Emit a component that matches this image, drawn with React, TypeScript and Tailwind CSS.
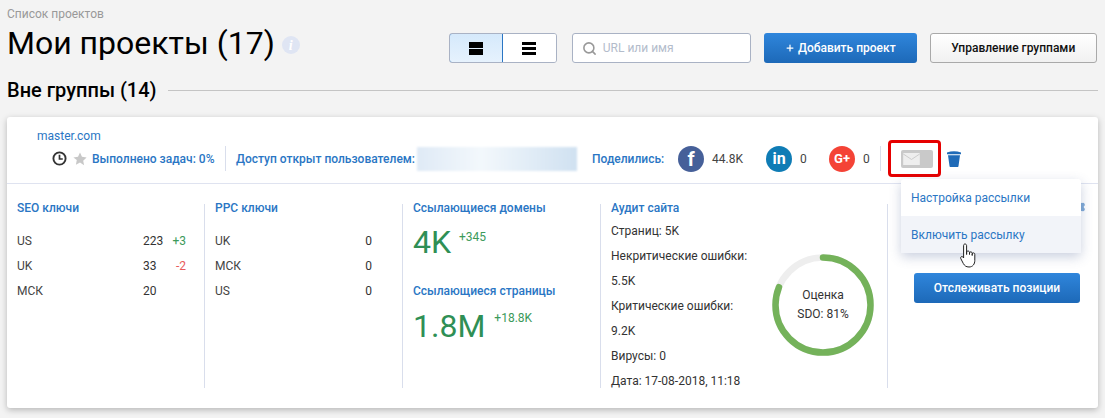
import React from 'react';
import { Settings, Search, Plus } from 'lucide-react';

const blue = 'text-[#2a76c4]';

const Divider = () => <div className="w-px self-stretch bg-[#d9deec]" />;

const KeyRow = ({ name, value, delta, red, left }: { name: string; value: string; delta?: string; red?: boolean; left: number }) => (
  <div className="flex h-[25px] items-center text-[12px] text-[#444]">
    <span style={{ width: left }}>{name}</span>
    <span className="text-[#333]">{value}</span>
    {delta && (
      <span className={`ml-auto ${red ? 'text-[#e85a5a]' : 'text-[#3c9a5a]'}`}>{delta}</span>
    )}
  </div>
);

const Social = ({ bg, count, children, className }: { bg: string; count: string; children: React.ReactNode; className: string }) => (
  <div className={`flex items-center ${className}`}>
    <div className={`flex h-[26px] w-[26px] items-center justify-center rounded-full text-white ${bg}`}>{children}</div>
    <span className="ml-2 text-[12px] text-[#444]">{count}</span>
  </div>
);

const Ring = () => (
  <div className="relative h-[102px] w-[102px]">
    <svg viewBox="0 0 102 102" className="h-full w-full -rotate-90">
      <circle cx="51" cy="51" r="47.5" fill="none" stroke="#eeeeee" strokeWidth="6.5" />
      <circle cx="51" cy="51" r="47.5" fill="none" stroke="#74b25a" strokeWidth="6.5" strokeLinecap="round" strokeDasharray="241.7 298.5" />
    </svg>
    <div className="absolute inset-0 flex flex-col items-center justify-center text-[12px] leading-[19px] text-[#333]">
      <span>Оценка</span>
      <span>SDO: 81%</span>
    </div>
  </div>
);

const HandCursor = () => (
  <svg viewBox="0 0 18 26" className="absolute left-[960px] top-[242px] h-[27px] w-[18px]">
    <path
      d="M5 1.5c1 0 1.6.7 1.6 1.7V12V10c0-1 .7-1.5 1.4-1.5S9.500 9 9.500 10v2-1.300c0-.9.6-1.400 1.300-1.400s1.400.5 1.400 1.400V13v-1.300c0-.8.6-1.300 1.300-1.300s1.300.5 1.300 1.500V18c0 3.500-2 6.500-5.800 6.500-3 0-4.400-1.300-5.700-3.500L1 16.500c-.6-1-.4-1.900.3-2.300.8-.4 1.500 0 2 .8l.3.500V3.200C3.600 2.200 4 1.500 5 1.500z"
      fill="#fff"
      stroke="#222"
      strokeWidth="1"
      strokeLinejoin="round"
    />
  </svg>
);

export default function App() {
  return (
    <div className="relative h-[418px] w-[1105px] overflow-hidden bg-[#f3f3f3] font-['Roboto',sans-serif]">
      <div className="px-[7px] pt-[7px]">
        <div className="text-[12px] leading-[14px] text-[#999]">Список проектов</div>

        <div className="mt-[1px] flex h-[42px] items-start">
          <h1 className="text-[32px] leading-[42px] text-black">Мои проекты (17)</h1>
          <div className="ml-[7px] mt-[14px] flex h-[18px] w-[18px] items-center justify-center rounded-full bg-[#dfe5f3] font-['Liberation_Serif',serif] text-[14px] font-bold italic text-white">i</div>

          <div className="ml-[149px] mt-[11px] flex h-[30px] w-[108px] overflow-hidden rounded-[3px] border border-[#a9b2c4]">
            <div className="-m-px mr-0 flex w-[54px] items-center justify-center rounded-l-[3px] border border-[#2a76c4] bg-gradient-to-b from-[#d5e9fb] to-[#e6f2fd]">
              <div className="flex flex-col gap-[1px]">
                <div className="h-[6px] w-[14px] bg-black" />
                <div className="h-[6px] w-[14px] bg-black" />
              </div>
            </div>
            <div className="flex flex-1 items-center justify-center bg-white">
              <div className="flex flex-col gap-[2px]">
                <div className="h-[3px] w-[14px] bg-black" />
                <div className="h-[3px] w-[14px] bg-black" />
                <div className="h-[3px] w-[14px] bg-black" />
              </div>
            </div>
          </div>

          <div className="ml-[15px] mt-[11px] flex h-[30px] w-[179px] items-center rounded-[3px] border border-[#a9b2c4] bg-white pl-[9px]">
            <Search size={15} className="text-[#999]" strokeWidth={2.5} />
            <span className="ml-[6px] text-[12px] text-[#b3bccb]">URL или имя</span>
          </div>

          <button className="ml-[13px] mt-[11px] flex h-[30px] w-[153px] items-center justify-center rounded-[3px] bg-gradient-to-b from-[#2f86dc] to-[#1d69b8] text-[12px] font-medium text-white">
            <Plus size={10} strokeWidth={3} className="mr-[3px]" />
            Добавить проект
          </button>

          <button className="ml-[13px] mt-[11px] h-[30px] w-[167px] rounded-[3px] border border-[#a9a9a9] bg-gradient-to-b from-white to-[#f1f1f1] text-[12px] font-medium text-[#111]">
            Управление группами
          </button>
        </div>

        <div className="mt-[14px] flex h-[24px] items-center">
          <h2 className="text-[20px] font-medium leading-[24px] text-black">Вне группы (14)</h2>
          <div className="ml-[11px] h-px flex-1 bg-[#c4c4c4]" />
        </div>
      </div>

      <div className="mx-[7px] mt-[15px] h-[291px] rounded-[3px] bg-white shadow-[0_2px_6px_rgba(0,0,0,0.25)]">
        <div className="h-[67px] border-b border-[#dfe3f0]">
          <div className={`pl-[30px] pt-[12px] text-[12px] leading-[14px] ${blue}`}>master.com</div>
          <div className="mt-[3px] flex h-[25px] items-center">
            <svg viewBox="0 0 16 16" className="ml-[45px] h-[15px] w-[15px]">
              <circle cx="8" cy="8" r="6.500" fill="none" stroke="#333" strokeWidth="2" />
              <path d="M8 4v4.500h3.500" fill="none" stroke="#333" strokeWidth="1.800" />
            </svg>
            <svg viewBox="0 0 24 24" className="ml-[6px] h-[14px] w-[14px]">
              <path d="M12 1l3.400 7.300 7.900 1-5.800 5.500 1.500 7.900L12 17.900 5 21.700l1.500-7.900L.7 9.300l7.900-1z" fill="#c8c8c8" />
            </svg>
            <span className={`ml-[5px] w-[133px] text-[12px] font-medium ${blue}`}>Выполнено задач: 0%</span>
            <Divider />
            <span className={`ml-[10px] w-[181px] text-[12px] font-medium ${blue}`}>Доступ открыт пользователем:</span>
            <div className="h-[24px] w-[160px] bg-gradient-to-r from-[#dfeaf6] via-[#f3f8fc] via-40% to-[#d0e1f1] blur-[1px]" />
            <div className="ml-[4px] self-stretch"><Divider /></div>
            <span className={`ml-[10px] w-[86px] text-[12px] font-medium ${blue}`}>Поделились:</span>
            <Social bg="bg-[#466099]" count="44.8K" className="w-[88px]">
              <span className="text-[20px] font-bold leading-none">f</span>
            </Social>
            <Social bg="bg-[#0f7cb5]" count="0" className="w-[63px]">
              <span className="text-[16px] font-bold leading-none">in</span>
            </Social>
            <Social bg="bg-[#f44336]" count="0" className="w-[51px]">
              <span className="text-[13px] font-bold leading-none">G+</span>
            </Social>
            <Divider />
            <div className="ml-[7px] flex h-[37px] w-[53px] items-center rounded-[4px] border-[3px] border-[#e60000] pl-[10px]">
              <div className="flex h-[18px] w-[32px] items-center rounded-[2px] bg-[#c9c9c9] pl-[2px]">
                <svg viewBox="0 0 18 13" className="h-[12px] w-[17px]">
                  <rect width="18" height="13" fill="#eeeeee" />
                  <path d="M0 1l9 6 9-6" fill="none" stroke="#c9c9c9" strokeWidth="1" />
                </svg>
              </div>
            </div>
            <svg viewBox="0 0 14 17" className="ml-[6px] h-[17px] w-[14px]">
              <path d="M0 2.500Q7 .2 14 2.500V4.200H0z" fill="#1f6bb8" />
              <path d="M1 5.200h12l-1.500 10.800c0 .6-.5 1-1 1h-7c-.5 0-1-.4-1-1z" fill="#1f6bb8" />
            </svg>
          </div>
        </div>

        <div className="flex h-[204px] pt-[20px]">
          <div className="h-[184px] w-[197px] pl-[10px] pr-[18px]">
            <div className={`-mt-[3px] mb-[13px] text-[12px] font-medium leading-[14px] ${blue}`}>SEO ключи</div>
            <KeyRow name="US" value="223" delta="+3" left={126} />
            <KeyRow name="UK" value="33" delta="-2" red left={126} />
            <KeyRow name="МСК" value="20" left={126} />
          </div>
          <div className="h-[184px] w-[198px] border-l border-[#d9deec] pl-[10px] pr-[30px]">
            <div className={`-mt-[3px] mb-[13px] text-[12px] font-medium leading-[14px] ${blue}`}>PPC ключи</div>
            <KeyRow name="UK" value="0" left={152} />
            <KeyRow name="МСК" value="0" left={152} />
            <KeyRow name="US" value="0" left={152} />
          </div>
          <div className="h-[184px] w-[198px] border-l border-[#d9deec] pl-[10px]">
            <div className={`-mt-[3px] text-[12px] font-medium leading-[14px] ${blue}`}>Ссылающиеся домены</div>
            <div className="mt-[5px] flex h-[44px] text-[#2f8f55]">
              <span className="text-[32px] leading-[44px]">4K</span>
              <span className="ml-[8px] mt-[10px] text-[12px] leading-[14px] text-[#3c9a5a]">+345</span>
            </div>
            <div className={`mt-[20px] text-[12px] font-medium leading-[14px] ${blue}`}>Ссылающиеся страницы</div>
            <div className="mt-[6px] flex h-[44px] text-[#2f8f55]">
              <span className="text-[32px] leading-[44px]">1.8M</span>
              <span className="ml-[9px] mt-[7px] text-[12px] leading-[14px] text-[#3c9a5a]">+18.8K</span>
            </div>
          </div>
          <div className="flex h-[184px] w-[287px] border-l border-[#d9deec] pl-[10px]">
            <div className="w-[161px] text-[12px] leading-[25px] text-[#333]">
              <div className={`-mt-[3px] font-medium leading-[14px] ${blue}`}>Аудит сайта</div>
              <div className="mt-[4px]">Страниц: 5K</div>
              <div>Некритические ошибки:</div>
              <div>5.5K</div>
              <div>Критические ошибки:</div>
              <div>9.2K</div>
              <div>Вирусы: 0</div>
              <div>Дата: 17-08-2018, 11:18</div>
            </div>
            <div className="mt-[50px]"><Ring /></div>
          </div>
          <div className="h-[184px] flex-1 border-l border-[#d9deec] pl-[26px]">
            <div className="mt-[69px] flex h-[30px] w-[166px] items-center justify-center rounded-[3px] bg-gradient-to-b from-[#2f86dc] to-[#1d69b8] text-[12px] font-medium text-white">
              Отслеживать позиции
            </div>
          </div>
        </div>
      </div>

      <Settings size={14} className="absolute left-[1072px] top-[200px] fill-[#7fa9d6] text-[#7fa9d6]" />
      <div className="absolute left-[901px] top-[179px] w-[180px] rounded-[3px] bg-white text-[12px] shadow-[0_4px_12px_rgba(80,100,150,0.3)]">
        <div className={`flex h-[37px] items-center pl-[10px] ${blue}`}>Настройка рассылки</div>
        <div className={`flex h-[37px] items-center bg-[#f2f4f9] pl-[10px] ${blue}`}>Включить рассылку</div>
      </div>
      <HandCursor />
    </div>
  );
}
